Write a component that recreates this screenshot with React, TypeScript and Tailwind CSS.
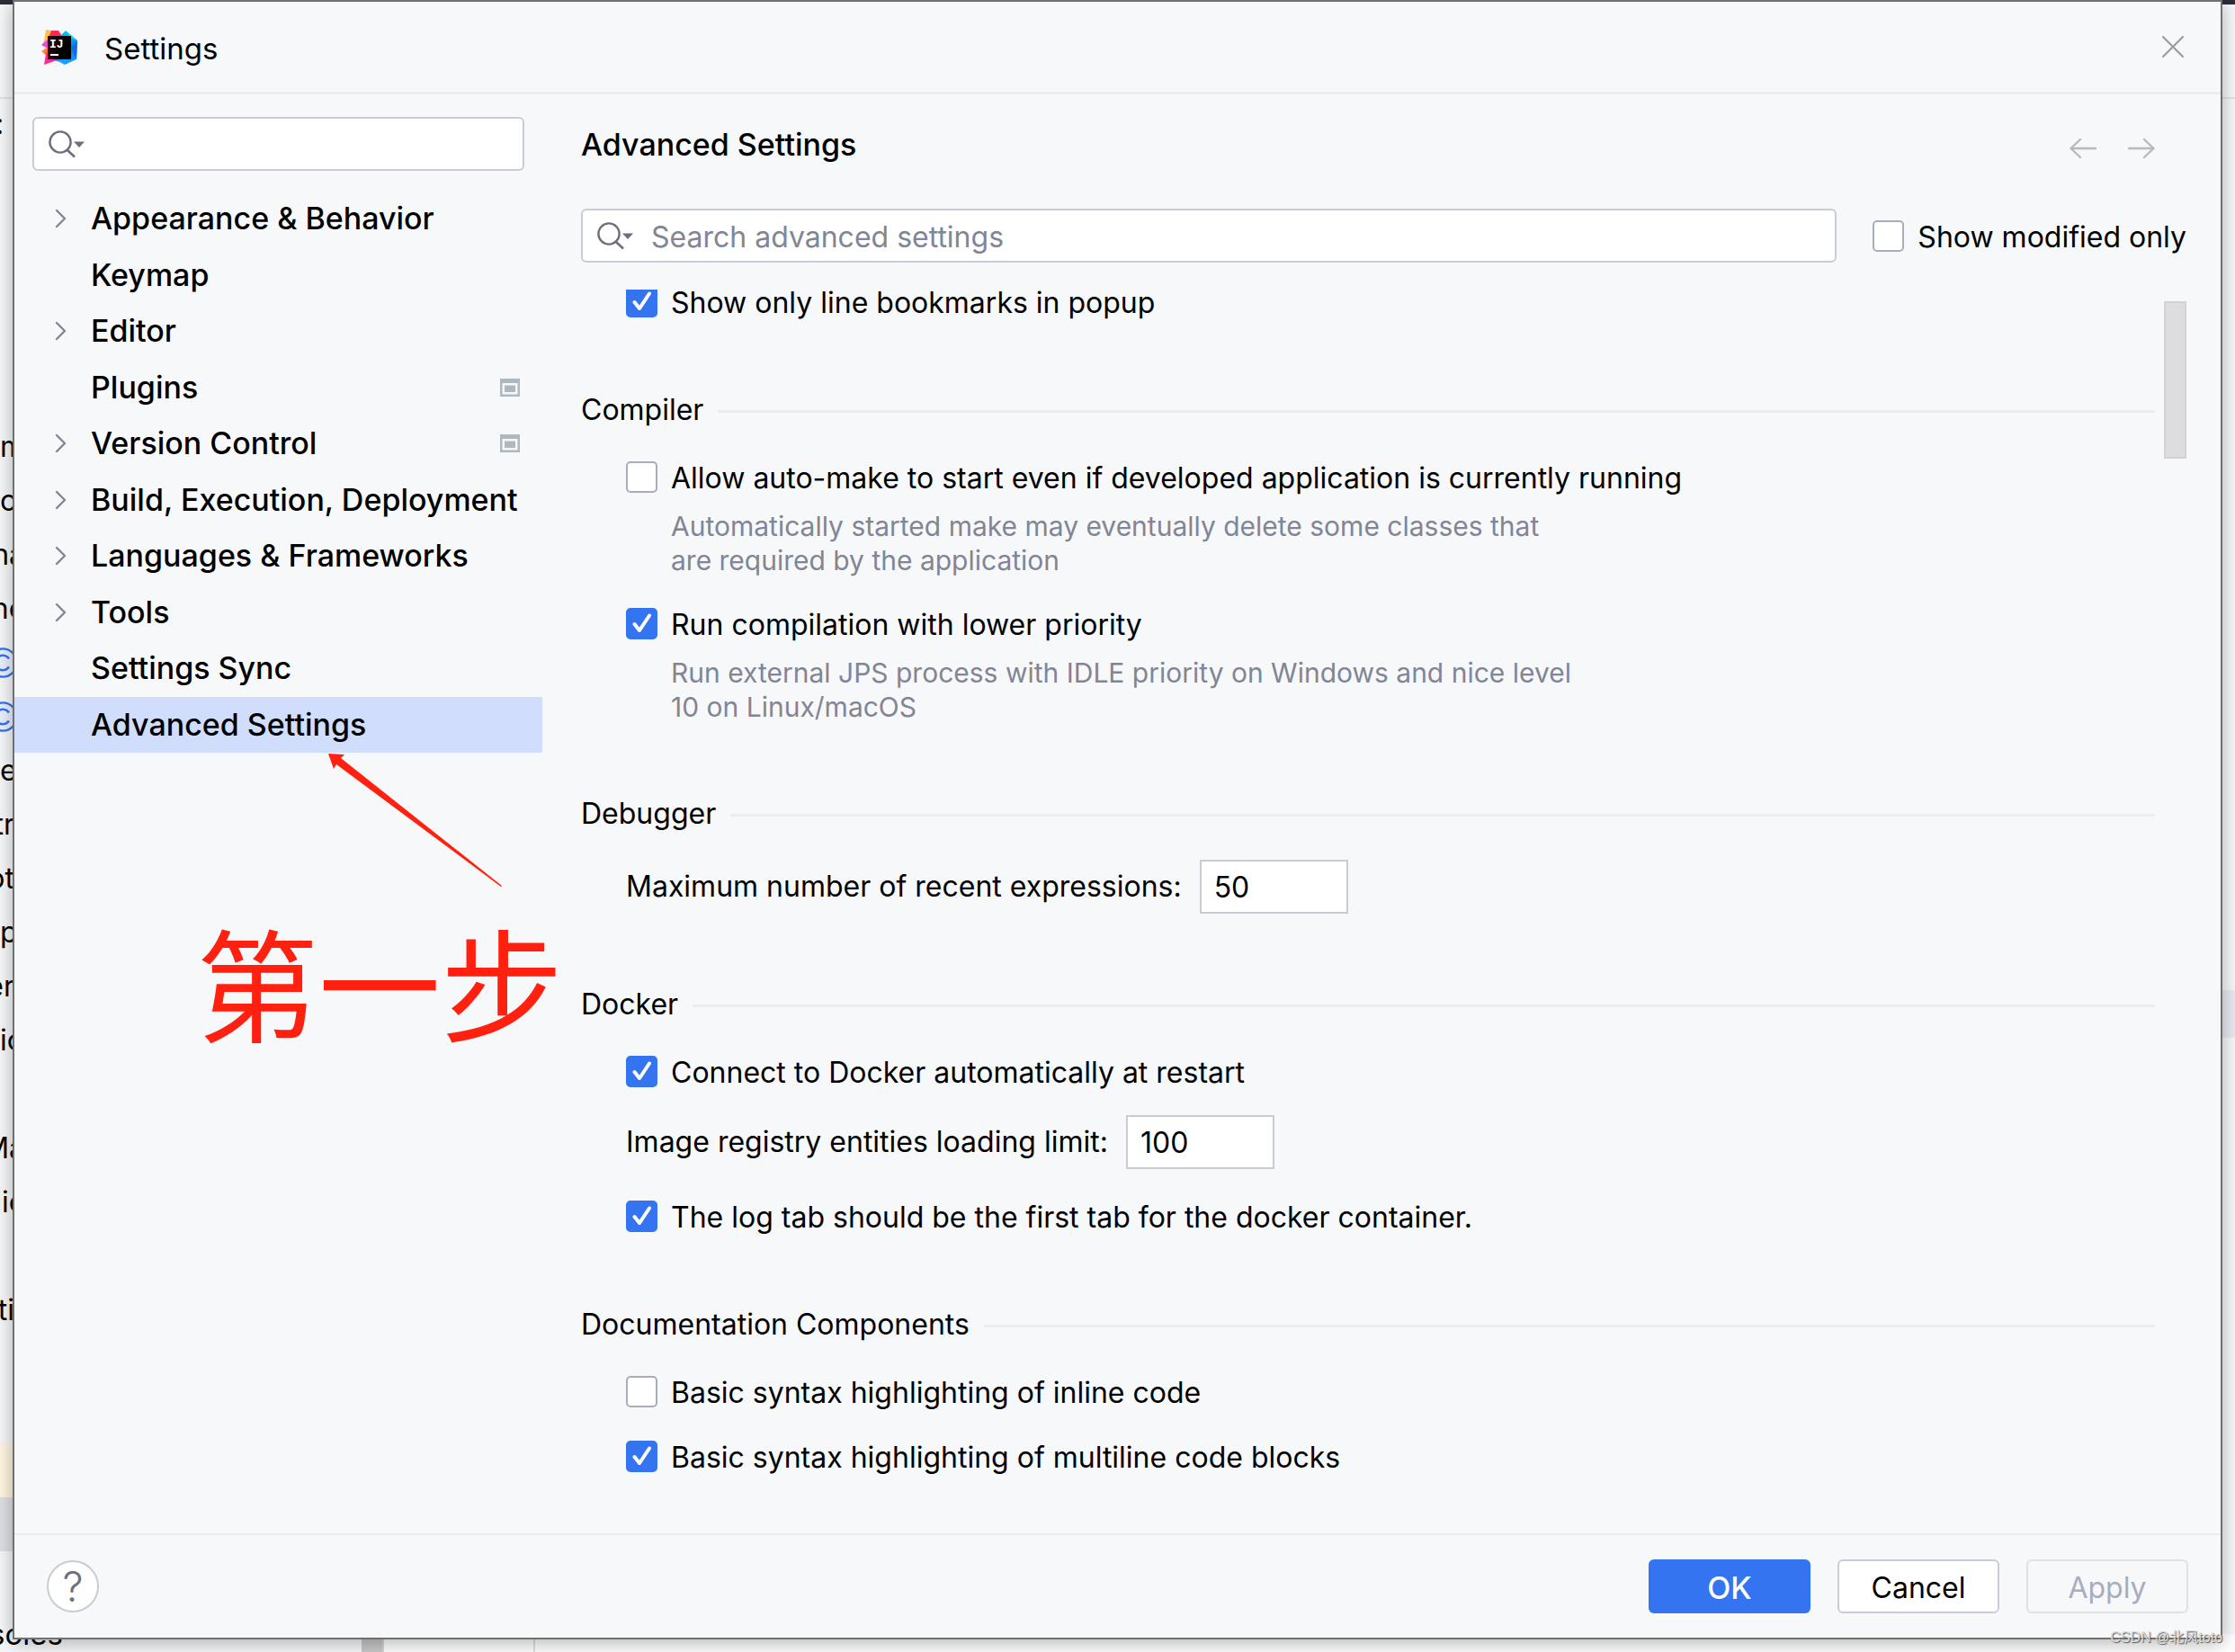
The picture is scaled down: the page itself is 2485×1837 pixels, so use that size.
import { useState } from "react";
import type { ReactNode } from "react";

const treeItems = [
  { name: "Appearance & Behavior", expandable: true },
  { name: "Keymap" },
  { name: "Editor", expandable: true },
  { name: "Plugins", project: true },
  { name: "Version Control", expandable: true, project: true },
  { name: "Build, Execution, Deployment", expandable: true },
  { name: "Languages & Frameworks", expandable: true },
  { name: "Tools", expandable: true },
  { name: "Settings Sync" },
  { name: "Advanced Settings" },
];

const projectFiles = [
  { text: "m", align: "" },
  { text: "o", align: "" },
  { text: "na", align: "w-7 justify-end" },
  { text: "nc", align: "w-7 justify-end" },
  { text: "", align: "", isClass: true },
  { text: "", align: "", isClass: true },
  { text: "e", align: "" },
  { text: "tr", align: "w-4 justify-end" },
  { text: "ot", align: "w-4 justify-end" },
  { text: "p", align: "" },
  { text: "er", align: "w-4 justify-end" },
  { text: "ic", align: "" },
  { text: "", align: "" },
  { text: "Ma", align: "w-7 justify-end" },
  { text: "lic", align: "w-7 justify-end" },
  { text: "", align: "" },
  { text: "ti", align: "w-4 justify-end" },
];

function IdeaLogo() {
  return (
    <svg width="40" height="39" viewBox="0 0 40 39" aria-hidden="true">
      <defs>
        <linearGradient id="warm" x1="0" y1="0" x2="1" y2="1">
          <stop offset="0" stopColor="#fdd835" />
          <stop offset="0.5" stopColor="#fc6d3c" />
          <stop offset="1" stopColor="#fe2857" />
        </linearGradient>
        <linearGradient id="cool" x1="0" y1="0" x2="0" y2="1">
          <stop offset="0" stopColor="#07c3f2" />
          <stop offset="0.5" stopColor="#087cfa" />
          <stop offset="1" stopColor="#1ea4ff" />
        </linearGradient>
        <linearGradient id="tile" x1="0" y1="0" x2="1" y2="0">
          <stop offset="0" stopColor="#2b0610" />
          <stop offset="0.6" stopColor="#000000" />
        </linearGradient>
      </defs>
      <path d="M5 0 L11 1 L9 12 L1 18 L3 12 Z" fill="#fcc24a" />
      <path d="M11 1 L19 1 L23 7 L20 12 L7 12 Z" fill="#fe2857" />
      <path d="M0 17 L9 9 L12 17 L7 21 Z" fill="#e54ae0" />
      <path d="M0 24 L7 19 L12 29 L5 28 Z" fill="url(#warm)" />
      <path d="M3 39 L5 27 L12 24 L20 33 Z" fill="#fd2c8b" />
      <path d="M12 34 L20 31 L26 37 L17 35 Z" fill="#b345f1" />
      <path d="M22 6 L27 1 L40 12 L39 33 L26 39 L17 34 L30 20 Z" fill="url(#cool)" />
      <path d="M27 1 L40 12 L32 9 Z" fill="#18d8fb" />
      <path d="M33 20 L40 12 L39 33 Z" fill="#0a6df0" />
      <rect x="7" y="7" width="26" height="26" fill="url(#tile)" />
      <text x="9" y="20" fill="#fff" fontSize="13" fontWeight="700" fontFamily="Liberation Mono, monospace">
        IJ
      </text>
      <rect x="10" y="27" width="9" height="2" fill="#fff" />
    </svg>
  );
}

function SearchIcon() {
  return (
    <svg width="41" height="31" viewBox="0 0 41 31" fill="none" aria-hidden="true">
      <circle cx="13" cy="13" r="11.6" stroke="#6c707e" strokeWidth="2.4" />
      <path d="M21 22 L29 29.5" stroke="#6c707e" strokeWidth="2.6" />
      <path d="M28 12.5 H40 L34 19 Z" fill="#6c707e" />
    </svg>
  );
}

function Chevron() {
  return (
    <svg width="13" height="22" viewBox="0 0 13 22" fill="none" aria-hidden="true">
      <path d="M2 2 L11 11 L2 20" stroke="#818594" strokeWidth="2.4" strokeLinecap="round" strokeLinejoin="round" />
    </svg>
  );
}

function ProjectIcon() {
  return (
    <svg width="22" height="20" viewBox="0 0 22 20" aria-hidden="true">
      <path d="M0 0 H22 V20 H0 Z M2.5 5 V17.5 H19.5 V5 Z" fill="#adb8c0" fillRule="evenodd" />
      <rect x="5" y="7.5" width="12" height="7.5" fill="#adb8c0" />
    </svg>
  );
}

function ClassIcon() {
  return (
    <svg className="-ml-[14px] shrink-0" width="34" height="34" viewBox="0 0 34 34" fill="none" stroke="#3574f0" strokeWidth="2.4" aria-hidden="true">
      <circle cx="17" cy="17" r="15.6" fill="#eaf1ff" />
      <path d="M24 12.5 A8.2 8.2 0 1 0 24 21.5" />
    </svg>
  );
}

function Arrow({ back }: { back?: boolean }) {
  return (
    <svg width="30" height="24" viewBox="0 0 30 24" fill="none" stroke="#b9b9b9" strokeWidth="2.4" strokeLinecap="round" strokeLinejoin="round" aria-hidden="true">
      {back ? <path d="M29 12 H1.5 M12 2 L1.5 12 L12 22" /> : <path d="M1 12 H28.5 M18 2 L28.5 12 L18 22" />}
    </svg>
  );
}

function Checkbox({ label, initial = false }: { label: string; initial?: boolean }) {
  const [checked, setChecked] = useState(initial);

  return (
    <label className="flex h-10 items-center gap-[15px] whitespace-nowrap">
      <span className="relative flex size-[35px] shrink-0 items-center justify-center">
        <input
          type="checkbox"
          checked={checked}
          onChange={() => setChecked(!checked)}
          className="size-[35px] appearance-none rounded-[5px] border-2 border-[#a8adbd] bg-white checked:border-[#3574f0] checked:bg-[#3574f0]"
        />
        {checked && (
          <svg className="pointer-events-none absolute" width="22" height="22" viewBox="0 0 22 22" fill="none" aria-hidden="true">
            <path d="M2.5 12 L8 19 L19 2.5" stroke="#fff" strokeWidth="4" strokeLinecap="round" strokeLinejoin="round" />
          </svg>
        )}
      </span>
      <span className="pt-[3px]">{label}</span>
    </label>
  );
}

function Comment({ children }: { children: ReactNode }) {
  return <p className="-mt-4 -mb-px max-w-[1060px] pl-[50px] text-[30px] leading-[38px] text-[#818594]">{children}</p>;
}

function NumberField({ id, label, value }: { id: string; label: string; value: string }) {
  return (
    <div className="-mt-[3px] flex h-15 items-center gap-5">
      <label htmlFor={id} className="whitespace-nowrap">{label}</label>
      <input
        id={id}
        type="text"
        defaultValue={value}
        className="h-15 w-[165px] border-2 border-[#c9ccd6] bg-white px-[14px] outline-none"
      />
    </div>
  );
}

function Section({ title, children }: { title: string; children: ReactNode }) {
  return (
    <section>
      <h3 className="mb-[35px] flex h-10 items-center gap-4">
        <span className="pt-px whitespace-nowrap">{title}</span>
        <span className="mt-1 h-[3px] flex-1 bg-[#ebecf0]" />
      </h3>
      <div className="flex flex-col gap-8 pl-[50px]">{children}</div>
    </section>
  );
}

// IDE window that shows round the edges of the dialog
function Backdrop() {
  return (
    <div className="absolute inset-0 overflow-hidden bg-[#f7f8fa]" aria-hidden="true">
      <div className="h-[5px] bg-[#2b2d38]" />
      <div className="h-[105px] border-b-2 border-[#e4e5ea]" />
      <div className="absolute top-[118px] -left-[5px]">:</div>
      <ul className="absolute top-[467px] left-0">
        {projectFiles.map((file, i) => (
          <li key={i} className={`flex h-15 items-center ${file.align}`}>
            {file.isClass ? <ClassIcon /> : file.text}
          </li>
        ))}
      </ul>
      <div className="absolute top-[1605px] left-0 h-15 w-4 bg-[#fff7e0]" />
      <div className="absolute top-[1665px] left-0 h-15 w-4 bg-[#dfe0e5]" />
      <div className="absolute bottom-0 -left-[12px] text-[33px] leading-10">soles</div>
      <div className="absolute right-0 bottom-0 left-[402px] flex h-5 bg-white">
        <div className="w-[25px] border-r-2 border-[#d8d8dc] bg-[#c8c8ca]" />
        <div className="w-[168px] border-r-2 border-[#dfe0e5]" />
      </div>
      <div className="absolute top-[1101px] right-0 h-[53px] w-4 bg-[#e9ebf3]" />
    </div>
  );
}

export default function App() {
  const [selected, setSelected] = useState("Advanced Settings");

  return (
    <div className="relative h-screen overflow-hidden px-[14px] pb-[14px] font-['Inter',sans-serif] text-[32px] leading-10 text-black">
      <Backdrop />

      {/* Dialog */}
      <div className="relative flex h-full flex-col border-2 border-[#707070] bg-[#f7f8fa] shadow-[0_4px_20px_rgba(0,0,0,0.3)]">
        <header className="flex h-[103px] shrink-0 items-center border-b-[3px] border-[#ebecf0] pr-[40px] pl-[30px]">
          <IdeaLogo />
          <h1 className="ml-[30px] flex-1 pt-[3px] text-[33px]">Settings</h1>
          <button type="button" aria-label="Close">
            <svg width="26" height="26" viewBox="0 0 26 26" fill="none" stroke="#9c9c9c" strokeWidth="2.2" strokeLinecap="round" aria-hidden="true">
              <path d="M2 2 L24 24 M24 2 L2 24" />
            </svg>
          </button>
        </header>

        <div className="flex min-h-0 flex-1">
          {/* Sidebar */}
          <nav className="w-[587px] shrink-0 pt-[25px]">
            <label className="mx-5 flex h-15 items-center rounded-md border-2 border-[#c9ccd6] bg-white pl-4">
              <SearchIcon />
              <input type="text" aria-label="Search settings" className="ml-3 min-w-0 flex-1 outline-none" />
            </label>
            <ul className="mt-[22px] flex h-[625px] flex-col text-[34px] font-medium">
              {treeItems.map((item) => (
                <li key={item.name} className="flex-1">
                  <button
                    type="button"
                    onClick={() => setSelected(item.name)}
                    className={`flex h-full w-full items-center pr-[25px] pl-[45px] text-left ${
                      selected === item.name ? "bg-[#d0ddfc]" : ""
                    }`}
                  >
                    <span className="w-10">{item.expandable && <Chevron />}</span>
                    <span className="flex-1 whitespace-nowrap">{item.name}</span>
                    {item.project && <ProjectIcon />}
                  </button>
                </li>
              ))}
            </ul>
          </nav>

          {/* Content */}
          <main className="flex min-w-0 flex-1 flex-col pt-9 pr-[38px] pl-[43px]">
            <div className="flex h-10 items-center">
              <h2 className="flex-1 text-[34px] font-medium">Advanced Settings</h2>
              <div className="mt-2 mr-[35px] flex gap-[35px]">
                <button type="button" aria-label="Back"><Arrow back /></button>
                <button type="button" aria-label="Forward"><Arrow /></button>
              </div>
            </div>

            <div className="mt-[51px] flex items-center gap-10">
              <label className="flex h-15 flex-1 items-center rounded-md border-2 border-[#c9ccd6] bg-white pl-4">
                <SearchIcon />
                <input
                  type="text"
                  aria-label="Search advanced settings"
                  placeholder="Search advanced settings"
                  className="ml-[19px] min-w-0 flex-1 pt-[3px] outline-none placeholder:text-[#818594]"
                />
              </label>
              <Checkbox label="Show modified only" />
            </div>

            <div className="mt-[30px] flex min-h-0 flex-1 gap-[10px] overflow-hidden">
              <div className="-mt-[7px] flex flex-1 flex-col gap-20">
                <div className="pl-[50px]">
                  <Checkbox label="Show only line bookmarks in popup" initial />
                </div>

                <Section title="Compiler">
                  <Checkbox label="Allow auto-make to start even if developed application is currently running" />
                  <Comment>
                    Automatically started make may eventually delete some classes that
                    <br />
                    are required by the application
                  </Comment>
                  <Checkbox label="Run compilation with lower priority" initial />
                  <Comment>
                    Run external JPS process with IDLE priority on Windows and nice level
                    <br />
                    10 on Linux/macOS
                  </Comment>
                </Section>

                <Section title="Debugger">
                  <NumberField id="recent" label="Maximum number of recent expressions:" value="50" />
                </Section>

                <Section title="Docker">
                  <Checkbox label="Connect to Docker automatically at restart" initial />
                  <NumberField id="registry" label="Image registry entities loading limit:" value="100" />
                  <Checkbox label="The log tab should be the first tab for the docker container." initial />
                </Section>

                <Section title="Documentation Components">
                  <Checkbox label="Basic syntax highlighting of inline code" />
                  <Checkbox label="Basic syntax highlighting of multiline code blocks" initial />
                </Section>
              </div>
              <div className="w-[25px] pt-[13px]">
                <div className="h-[175px] border-2 border-[#d3d3d5] bg-[#dddddf]" />
              </div>
            </div>
          </main>
        </div>

        {/* Footer */}
        <footer className="flex h-[116px] shrink-0 items-center gap-[30px] border-t-2 border-[#ebecf0] pr-9 pl-9">
          <button
            type="button"
            aria-label="Help"
            className="flex size-[58px] items-center justify-center rounded-full border-2 border-[#c9ccd6] bg-white text-[46px] font-light text-[#6c707e]"
          >
            ?
          </button>
          <div className="flex-1" />
          <button type="button" className="h-15 w-[180px] rounded-md bg-[#3574f0] pt-[3px] text-[34px] font-medium text-white">OK</button>
          <button type="button" className="h-15 w-[180px] rounded-md border-2 border-[#c9ccd6] bg-white pt-[3px]">Cancel</button>
          <button type="button" disabled className="h-15 w-[180px] rounded-md border-2 border-[#dfe1e5] pt-[3px] text-[#a8adbd]">Apply</button>
        </footer>
      </div>

      {/* Annotation */}
      <svg className="pointer-events-none absolute top-[836px] left-[363px]" width="198" height="152" viewBox="0 0 198 152" aria-hidden="true">
        <path d="M2 2 L20 3 L16 7 L195 149 L194 150 L11 14 L8 19 Z" fill="#ff2010" />
      </svg>
      <p className="pointer-events-none absolute top-[1020px] left-[218px] font-['Noto_Sans_CJK_SC',sans-serif] text-[136px] leading-[140px] whitespace-nowrap text-[#ff2010]">
        第一步
      </p>

      <p className="absolute right-[14px] bottom-[6px] font-['Liberation_Sans','Noto_Sans_CJK_SC',sans-serif] text-base leading-5 text-[#dcdcdc] [text-shadow:1px_1px_1px_#555]">
        CSDN @北风toto
      </p>
    </div>
  );
}
